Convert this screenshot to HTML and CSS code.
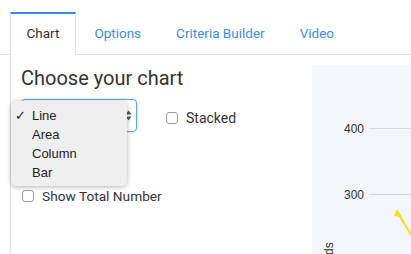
FILE: index.html
```html
<!DOCTYPE html>
<html lang="en">
<head>
    <meta charset="UTF-8">
    <title>Chart Settings</title>
    <link rel="stylesheet" href="styles.css">
</head>
<body>
    <!-- Tabs -->
    <nav class="tabs">
        <a class="tab active">Chart</a>
        <a class="tab">Options</a>
        <a class="tab">Criteria Builder</a>
        <a class="tab">Video</a>
    </nav>

    <main class="panel">
        <!-- Settings -->
        <section class="settings">
            <h2>Choose your chart</h2>
            <div class="row">
                <div class="select-wrap">
                    <div class="select">
                        <span class="arrows">
                            <svg width="7" height="11" viewBox="0 0 7 11"><path d="M3.5 0.5 L6.5 4.5 H0.5 Z M3.5 10.5 L6.5 6.5 H0.5 Z" fill="#555"/></svg>
                        </span>
                    </div>
                    <ul class="dropdown">
                        <li><span class="check">✓</span>Line</li>
                        <li>Area</li>
                        <li>Column</li>
                        <li>Bar</li>
                    </ul>
                </div>
                <label class="check-item stacked"><span class="box"></span>Stacked</label>
            </div>
            <label class="check-item total"><span class="box"></span>Show Total Number</label>
        </section>

        <!-- Chart preview -->
        <section class="chart">
            <svg width="99" height="190" viewBox="0 0 99 190">
                <line x1="57" y1="63.5" x2="99" y2="63.5" stroke="#d8d8d8"/>
                <line x1="57" y1="129.5" x2="99" y2="129.5" stroke="#d8d8d8"/>
                <text x="52" y="68" text-anchor="end" class="axis">400</text>
                <text x="52" y="134" text-anchor="end" class="axis">300</text>
                <line x1="86" y1="148" x2="99" y2="170" stroke="#f5de1c" stroke-width="2"/>
                <path d="M85 144 L90 152 L82 151 Z" fill="#f5de1c"/>
                <text x="0" y="0" class="axis" transform="translate(21 190) rotate(-90)">ds</text>
            </svg>
        </section>
    </main>
</body>
</html>
```

FILE: styles.css
```css
body {
    margin: 0;
    font-family: Roboto, "Liberation Sans", sans-serif;
    color: #333;
    background: #fff;
}
.tabs {
    display: flex;
    padding: 12px 0 0 10px;
    border-bottom: 1px solid #ddd;
}
.tab {
    display: block;
    padding: 12px 15.5px 13px;
    margin: 0 2px -1px 0;
    font-size: 13.5px;
    line-height: 15px;
    color: #3a8ee8;
    border: 1px solid transparent;
    border-top-width: 2px;
}
.tab.active {
    color: #333;
    background: #fff;
    border-color: #ddd;
    border-top-color: #2c8ee8;
    border-bottom-color: #fff;
}
.panel {
    display: flex;
    margin-left: 10px;
    border-left: 1px solid #ddd;
    height: 200px;
}
.settings {
    flex: 1;
    padding: 11px 0 0 10px;
}
h2 {
    margin: 0 0 9px;
    font-size: 20px;
    font-weight: 400;
    line-height: 24px;
    color: #333;
}
.row {
    display: flex;
    align-items: center;
}
.select-wrap {
    position: relative;
}
.select {
    width: 114px;
    height: 31px;
    border: 1px solid #5fa2ec;
    border-radius: 4px;
    box-shadow: 0 0 2px rgba(80, 150, 235, 0.5);
    display: flex;
    align-items: center;
    justify-content: flex-end;
}
.arrows {
    display: flex;
    margin-right: 4px;
}
.dropdown {
    position: absolute;
    left: -10px;
    top: 2px;
    width: 116px;
    margin: 0;
    padding: 5px 0 4px;
    list-style: none;
    background: #efefef;
    border-radius: 5px;
    box-shadow: 0 1px 5px rgba(0, 0, 0, 0.3);
    font-family: "Liberation Sans", sans-serif;
    font-size: 13px;
    color: #222;
}
.dropdown li {
    position: relative;
    height: 19px;
    line-height: 19px;
    padding-left: 21px;
}
.check {
    position: absolute;
    left: 4px;
}
.check-item {
    display: flex;
    align-items: center;
    font-size: 14px;
    color: #333;
}
.box {
    width: 10px;
    height: 10px;
    border: 1px solid #999;
    border-radius: 3px;
    background: #fff;
    margin-right: 8px;
}
.stacked {
    margin-left: 29px;
    margin-top: 4px;
}
.total {
    margin-top: 56px;
    margin-left: 1px;
    font-size: 13.7px;
}
.chart {
    width: 99px;
    margin-top: 10px;
    background: #f3f6fa;
}
.chart svg {
    display: block;
}
.axis {
    font-family: "Liberation Sans", sans-serif;
    font-size: 12px;
    fill: #333;
}
```
